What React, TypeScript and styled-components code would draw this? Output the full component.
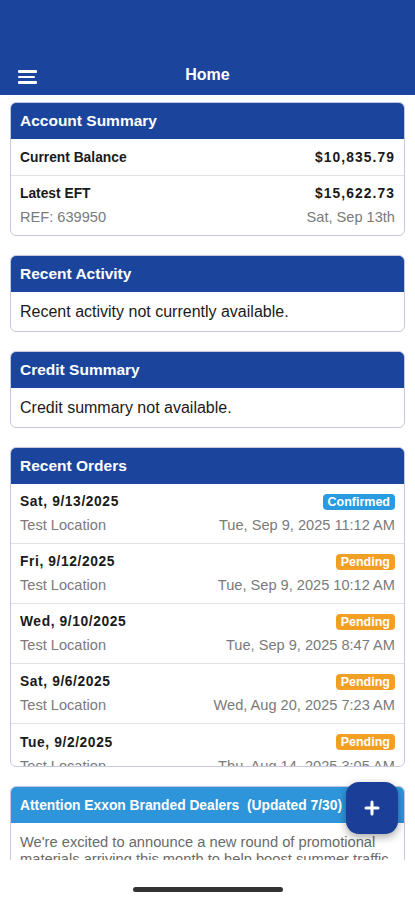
import React from 'react';
import styled, { createGlobalStyle } from 'styled-components';

const GlobalStyle = createGlobalStyle`
    html, body {
        margin:0;
        padding:0;
        background:#fff;
    }
    * {
        box-sizing:border-box;
    }
    body {
        font-family:"Liberation Sans", Arial, sans-serif;
        color:#111;
    }
`;

const Screen = styled.div`
    position:relative;
    width:415px;
    height:900px;
    display:flex;
    flex-direction:column;
    background:#fff;
    overflow:hidden;
`;

const TopBar = styled.div`
    height:95px;
    flex-shrink:0;
    background:#1b459d;
    display:flex;
    align-items:flex-end;
`;

const NavRow = styled.div`
    position:relative;
    width:100%;
    height:42px;
    display:flex;
    align-items:center;
    justify-content:center;
`;

const MenuButton = styled.div`
    position:absolute;
    left:18px;
    top:17px;
    width:19px;
    display:flex;
    flex-direction:column;
    gap:3px;
`;

const MenuLine = styled.span<{ $w: number }>`
    display:block;
    width:${p => p.$w}px;
    height:2.5px;
    border-radius:1px;
    background:#fff;
`;

const Title = styled.div`
    color:#fff;
    font-weight:700;
    font-size:16px;
    margin-top:1px;
`;

const Scroll = styled.div`
    height:765px;
    flex-shrink:0;
    overflow:hidden;
    padding:7px 10px 0;
    display:flex;
    flex-direction:column;
    gap:19px;
`;

const Card = styled.div<{ $height?: number }>`
    flex-shrink:0;
    border:1px solid #c6c7e1;
    border-radius:6px;
    overflow:hidden;
    background:#fff;
    ${p => p.$height ? `height:${p.$height}px;` : ''}
`;

const CardHead = styled.div<{ $light?: boolean }>`
    height:36px;
    display:flex;
    align-items:center;
    padding-left:9px;
    background:${p => p.$light ? '#2f95db' : '#1b459d'};
    color:#fff;
    font-weight:700;
    font-size:${p => p.$light ? '13.8px' : '15.5px'};
    white-space:nowrap;
`;

const Row = styled.div<{ $h: number }>`
    height:${p => p.$h}px;
    padding:0 9px;
    display:flex;
    flex-direction:column;
    justify-content:center;
    gap:7px;
    border-bottom:1px solid #e2e2e6;

    &:last-child {
        border-bottom:0;
    }
`;

const Line = styled.div`
    display:flex;
    justify-content:space-between;
    align-items:center;
    line-height:17px;
`;

const Label = styled.span<{ $spacing?: number }>`
    font-size:13.8px;
    font-weight:700;
    color:#1a1a1a;
    letter-spacing:${p => p.$spacing ?? 0}px;
`;

const Sub = styled.span`
    font-size:14.6px;
    color:#7a7a7a;
`;

const Message = styled.div`
    height:39px;
    padding:0 9px;
    display:flex;
    align-items:center;
    font-size:16px;
    color:#1a1a1a;
`;

const Badge = styled.span<{ $kind: 'confirmed' | 'pending' }>`
    display:inline-block;
    padding:1px 5px;
    border-radius:4px;
    font-size:12.5px;
    font-weight:700;
    line-height:14px;
    color:#fff;
    background:${p => p.$kind === 'confirmed' ? '#2a9be1' : '#f2a023'};
`;

const Notice = styled.div`
    padding:11px 9px 0;
    font-size:14.7px;
    line-height:17px;
    color:#6a6a6a;
`;

const Fab = styled.div`
    position:absolute;
    left:346px;
    top:782px;
    width:52px;
    height:52px;
    border-radius:13px;
    background:#1b3f98;
    box-shadow:0 3px 8px rgba(0,0,0,0.35);
    display:flex;
    align-items:center;
    justify-content:center;
`;

const HomeBar = styled.div`
    flex:1;
    display:flex;
    justify-content:center;
    padding-top:27px;
`;

const Indicator = styled.div`
    width:150px;
    height:5px;
    border-radius:3px;
    background:#333;
`;

type Order = { date: string; status: 'confirmed' | 'pending'; placed: string };

const orders: Order[] = [
    { date: 'Sat, 9/13/2025', status: 'confirmed', placed: 'Tue, Sep 9, 2025 11:12 AM' },
    { date: 'Fri, 9/12/2025', status: 'pending', placed: 'Tue, Sep 9, 2025 10:12 AM' },
    { date: 'Wed, 9/10/2025', status: 'pending', placed: 'Tue, Sep 9, 2025 8:47 AM' },
    { date: 'Sat, 9/6/2025', status: 'pending', placed: 'Wed, Aug 20, 2025 7:23 AM' },
    { date: 'Tue, 9/2/2025', status: 'pending', placed: 'Thu, Aug 14, 2025 3:05 AM' },
];

const App = () => {
    return (
        <Screen>
            <GlobalStyle />
            <TopBar>
                <NavRow>
                    <MenuButton>
                        <MenuLine $w={19} />
                        <MenuLine $w={17} />
                        <MenuLine $w={19} />
                    </MenuButton>
                    <Title>Home</Title>
                </NavRow>
            </TopBar>
            <Scroll>
                <Card>
                    <CardHead>Account Summary</CardHead>
                    <Row $h={37}>
                        <Line><Label>Current Balance</Label><Label $spacing={1.1}>$10,835.79</Label></Line>
                    </Row>
                    <Row $h={59}>
                        <Line><Label>Latest EFT</Label><Label $spacing={1.1}>$15,622.73</Label></Line>
                        <Line><Sub>REF: 639950</Sub><Sub>Sat, Sep 13th</Sub></Line>
                    </Row>
                </Card>
                <Card>
                    <CardHead>Recent Activity</CardHead>
                    <Message>Recent activity not currently available.</Message>
                </Card>
                <Card>
                    <CardHead>Credit Summary</CardHead>
                    <Message>Credit summary not available.</Message>
                </Card>
                <Card $height={320}>
                    <CardHead>Recent Orders</CardHead>
                    {orders.map(o => (
                        <Row $h={60} key={o.date}>
                            <Line>
                                <Label $spacing={0.6}>{o.date}</Label>
                                <Badge $kind={o.status}>{o.status === 'confirmed' ? 'Confirmed' : 'Pending'}</Badge>
                            </Line>
                            <Line><Sub>Test Location</Sub><Sub>{o.placed}</Sub></Line>
                        </Row>
                    ))}
                </Card>
                <Card>
                    <CardHead $light>Attention Exxon Branded Dealers&nbsp; (Updated 7/30)</CardHead>
                    <Notice>
                        We're excited to announce a new round of promotional materials arriving this month to help boost summer traffic and in-store sales across all locations.
                    </Notice>
                </Card>
            </Scroll>
            <HomeBar><Indicator /></HomeBar>
            <Fab>
                <svg width="16" height="16" viewBox="0 0 16 16">
                    <path d="M8 2v12M2 8h12" stroke="#fff" strokeWidth="3" strokeLinecap="round" />
                </svg>
            </Fab>
        </Screen>
    );
};

export default App;
